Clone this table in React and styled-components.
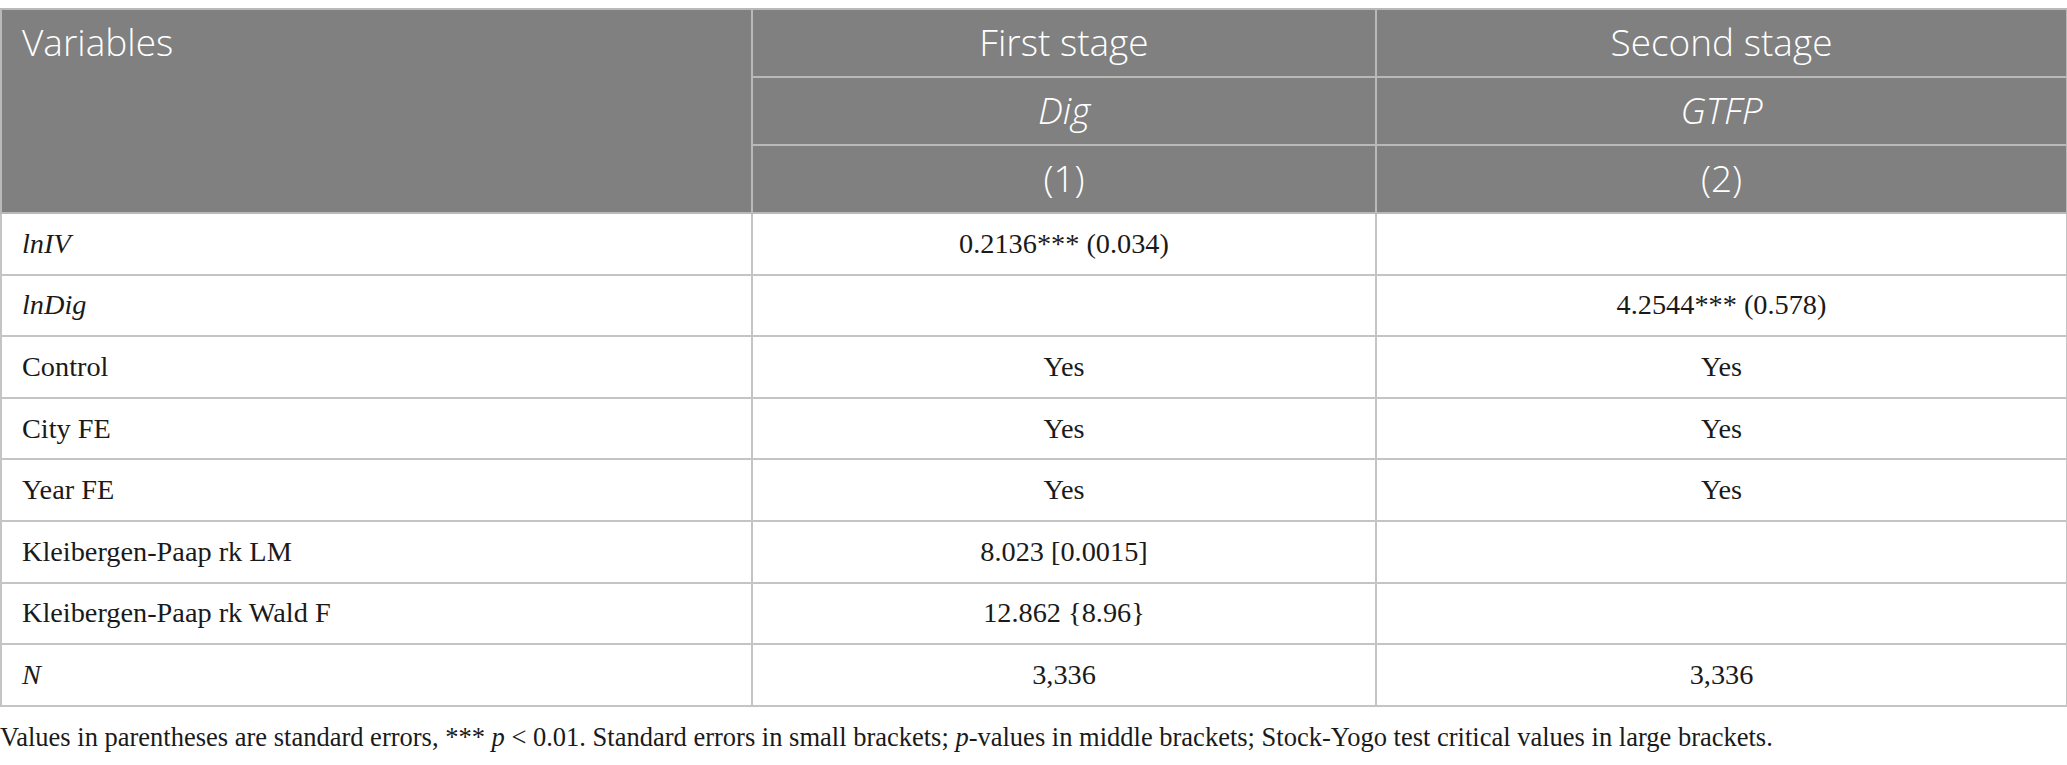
import React from "react";
import styled, { createGlobalStyle } from "styled-components";

const Global = createGlobalStyle`
  html, body { margin: 0; padding: 0; background: #ffffff; }
  body { padding-top: 8px; }
`;

const Wrap = styled.div`
  width: 2066px;
`;

const Table = styled.table`
  width: 100%;
  border-collapse: collapse;
  table-layout: fixed;
`;

const HeadCell = styled.th`
  background: #7f807f;
  color: #ffffff;
  font-family: "Open Sans", "Noto Sans", sans-serif;
  font-weight: 300;
  font-size: 37px;
  font-style: ${(p) => (p.$italic ? "italic" : "normal")};
  text-align: ${(p) => (p.$left ? "left" : "center")};
  vertical-align: top;
  height: 68px;
  box-sizing: border-box;
  padding: 8px 20px 0;
  border: 2px solid #b9b9b9;
  line-height: 48px;
  white-space: nowrap;
`;

const Cell = styled.td`
  font-family: "Liberation Serif", "Times New Roman", serif;
  font-size: 28.3px;
  color: #1a1a1a;
  font-style: ${(p) => (p.$italic ? "italic" : "normal")};
  text-align: ${(p) => (p.$left ? "left" : "center")};
  height: 61.6px;
  box-sizing: border-box;
  padding: 0 20px;
  border: 2px solid #c4c4c4;
  vertical-align: middle;
  white-space: nowrap;
`;

const Note = styled.p`
  margin: 15px 0 0;
  font-family: "Liberation Serif", "Times New Roman", serif;
  font-size: 26.5px;
  line-height: 30px;
  color: #1a1a1a;
`;

const rows = [
  { label: "lnIV", italic: true, a: "0.2136*** (0.034)", b: "" },
  { label: "lnDig", italic: true, a: "", b: "4.2544*** (0.578)" },
  { label: "Control", a: "Yes", b: "Yes" },
  { label: "City FE", a: "Yes", b: "Yes" },
  { label: "Year FE", a: "Yes", b: "Yes" },
  { label: "Kleibergen-Paap rk LM", a: "8.023 [0.0015]", b: "" },
  { label: "Kleibergen-Paap rk Wald F", a: "12.862 {8.96}", b: "" },
  { label: "N", italic: true, a: "3,336", b: "3,336" },
];

export default function App() {
  return (
    <Wrap>
      <Global />
      <Table>
        <colgroup>
          <col style={{ width: 751 }} />
          <col style={{ width: 624 }} />
          <col style={{ width: 691 }} />
        </colgroup>
        <thead>
          <tr>
            <HeadCell $left rowSpan={3}>Variables</HeadCell>
            <HeadCell>First stage</HeadCell>
            <HeadCell>Second stage</HeadCell>
          </tr>
          <tr>
            <HeadCell $italic>Dig</HeadCell>
            <HeadCell $italic>GTFP</HeadCell>
          </tr>
          <tr>
            <HeadCell>(1)</HeadCell>
            <HeadCell>(2)</HeadCell>
          </tr>
        </thead>
        <tbody>
          {rows.map((r) => (
            <tr key={r.label}>
              <Cell $left $italic={r.italic}>{r.label}</Cell>
              <Cell>{r.a}</Cell>
              <Cell>{r.b}</Cell>
            </tr>
          ))}
        </tbody>
      </Table>
      <Note>
        Values in parentheses are standard errors, *** <i>p</i> &lt; 0.01. Standard errors in small brackets; <i>p</i>-values in middle brackets; Stock-Yogo test critical values in large brackets.
      </Note>
    </Wrap>
  );
}
